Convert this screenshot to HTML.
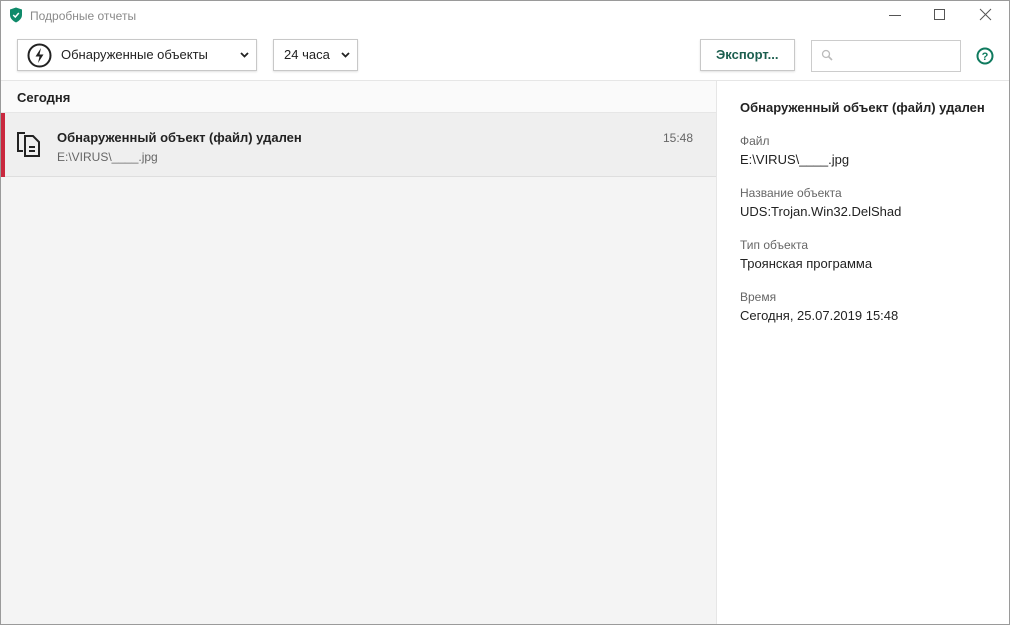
<!DOCTYPE html>
<html><head><meta charset="utf-8"><style>
*{margin:0;padding:0;box-sizing:border-box}
body{width:1010px;height:625px;overflow:hidden;font-family:"Liberation Sans","Noto Sans CJK SC",sans-serif;background:#fff;position:relative;color:#222}
.frame{position:absolute;inset:0;border:1px solid #9a9a9a;pointer-events:none}
.abs{position:absolute}
.title{left:30px;top:9px;font-size:12px;color:#8a8a8a}
.btn{position:absolute;border:1px solid #c8c8c8;background:#fff;box-shadow:0 1px 2px rgba(0,0,0,.12);font-size:13px;color:#222}
.lbl{font-size:12px;color:#666}
.val{font-size:13px;color:#222}
</style></head><body>
<svg class="abs" style="left:9px;top:7px" width="14" height="16" viewBox="0 0 14 16"><path d="M7 0.5 L13 2.5 V8 C13 11.5 10 14 7 15.5 C4 14 1 11.5 1 8 V2.5Z" fill="#0f8a6a"/><path d="M4.2 8 L6.3 10 L9.8 6" stroke="#fff" stroke-width="1.5" fill="none"/></svg>
<div class="abs title">Подробные отчеты</div>
<div class="abs" style="left:889px;top:15px;width:12px;height:1px;background:#555"></div>
<div class="abs" style="left:934px;top:9px;width:11px;height:11px;border:1px solid #555"></div>
<svg class="abs" style="left:979px;top:8px" width="13" height="13"><path d="M1 1L12 12M12 1L1 12" stroke="#555" stroke-width="1"/></svg>

<div class="btn" style="left:17px;top:39px;width:240px;height:32px">
<svg class="abs" style="left:9px;top:3px" width="25" height="25" viewBox="0 0 25 25"><circle cx="12.5" cy="12.5" r="11" stroke="#222" stroke-width="2" fill="none"/><path d="M14 5 L8.5 13.5 H12.5 L11 20 L16.5 11.5 H12.5Z" fill="#222"/></svg>
<span class="abs" style="left:43px;top:7px">Обнаруженные объекты</span>
<svg class="abs" style="left:222px;top:12px" width="9" height="6"><path d="M1 1L4.5 4.5L8 1" stroke="#222" stroke-width="1.8" fill="none"/></svg></div>
<div class="btn" style="left:273px;top:39px;width:85px;height:32px"><span class="abs" style="left:10px;top:7px">24 часа</span>
<svg class="abs" style="left:67px;top:12px" width="9" height="6"><path d="M1 1L4.5 4.5L8 1" stroke="#222" stroke-width="1.8" fill="none"/></svg></div>
<div class="btn" style="left:700px;top:39px;width:95px;height:32px;font-weight:bold;color:#1b5e4e"><span class="abs" style="left:15px;top:7px">Экспорт...</span></div>
<div class="abs" style="left:811px;top:40px;width:150px;height:32px;border:1px solid #ccc"><svg class="abs" style="left:9px;top:8px" width="13" height="13"><circle cx="5" cy="5" r="3.5" stroke="#bbb" stroke-width="1.3" fill="none"/><path d="M7.5 7.5L11 11" stroke="#bbb" stroke-width="1.6"/></svg></div>
<svg class="abs" style="left:976px;top:47px" width="18" height="18"><circle cx="9" cy="9" r="7.5" stroke="#0f7a5e" stroke-width="2" fill="none"/><text x="9" y="13" font-size="11" font-weight="bold" fill="#0f7a5e" text-anchor="middle" font-family="Liberation Sans">?</text></svg>
<div class="abs" style="left:0;top:80px;width:1010px;height:1px;background:#e6e6e6"></div>

<div class="abs" style="left:0;top:81px;width:716px;height:544px;background:#f4f4f4"></div>
<div class="abs" style="left:0;top:81px;width:716px;height:32px;background:#fafafa;border-bottom:1px solid #e6e6e6"></div>
<div class="abs" style="left:17px;top:90px;font-size:13px;font-weight:bold">Сегодня</div>
<div class="abs" style="left:0;top:113px;width:716px;height:64px;background:#efefef;border-bottom:1px solid #dedede"></div>
<div class="abs" style="left:0;top:113px;width:5px;height:64px;background:#c9283e"></div>
<svg class="abs" style="left:16px;top:129px" width="26" height="28" viewBox="0 0 26 28"><path d="M9 4H2V22H7" stroke="#222" stroke-width="2" fill="none"/><path d="M9 7H17L23 13V27H9Z" stroke="#222" stroke-width="2" fill="none"/><path d="M13 18H19M13 22H19" stroke="#222" stroke-width="2"/></svg>
<div class="abs" style="left:57px;top:130px;font-size:13px;font-weight:bold">Обнаруженный объект (файл) удален</div>
<div class="abs" style="left:57px;top:150px;font-size:12px;color:#666">E:\VIRUS\____.jpg</div>
<div class="abs" style="left:663px;top:131px;font-size:12px;color:#666">15:48</div>
<div class="abs" style="left:716px;top:81px;width:1px;height:544px;background:#e6e6e6"></div>

<div class="abs" style="left:740px;top:100px;font-size:13px;font-weight:bold">Обнаруженный объект (файл) удален</div>
<div class="abs lbl" style="left:740px;top:134px">Файл</div>
<div class="abs val" style="left:740px;top:152px">E:\VIRUS\____.jpg</div>
<div class="abs lbl" style="left:740px;top:186px">Название объекта</div>
<div class="abs val" style="left:740px;top:204px">UDS:Trojan.Win32.DelShad</div>
<div class="abs lbl" style="left:740px;top:238px">Тип объекта</div>
<div class="abs val" style="left:740px;top:256px">Троянская программа</div>
<div class="abs lbl" style="left:740px;top:290px">Время</div>
<div class="abs val" style="left:740px;top:308px">Сегодня, 25.07.2019 15:48</div>
<div class="frame"></div>
</body></html>
